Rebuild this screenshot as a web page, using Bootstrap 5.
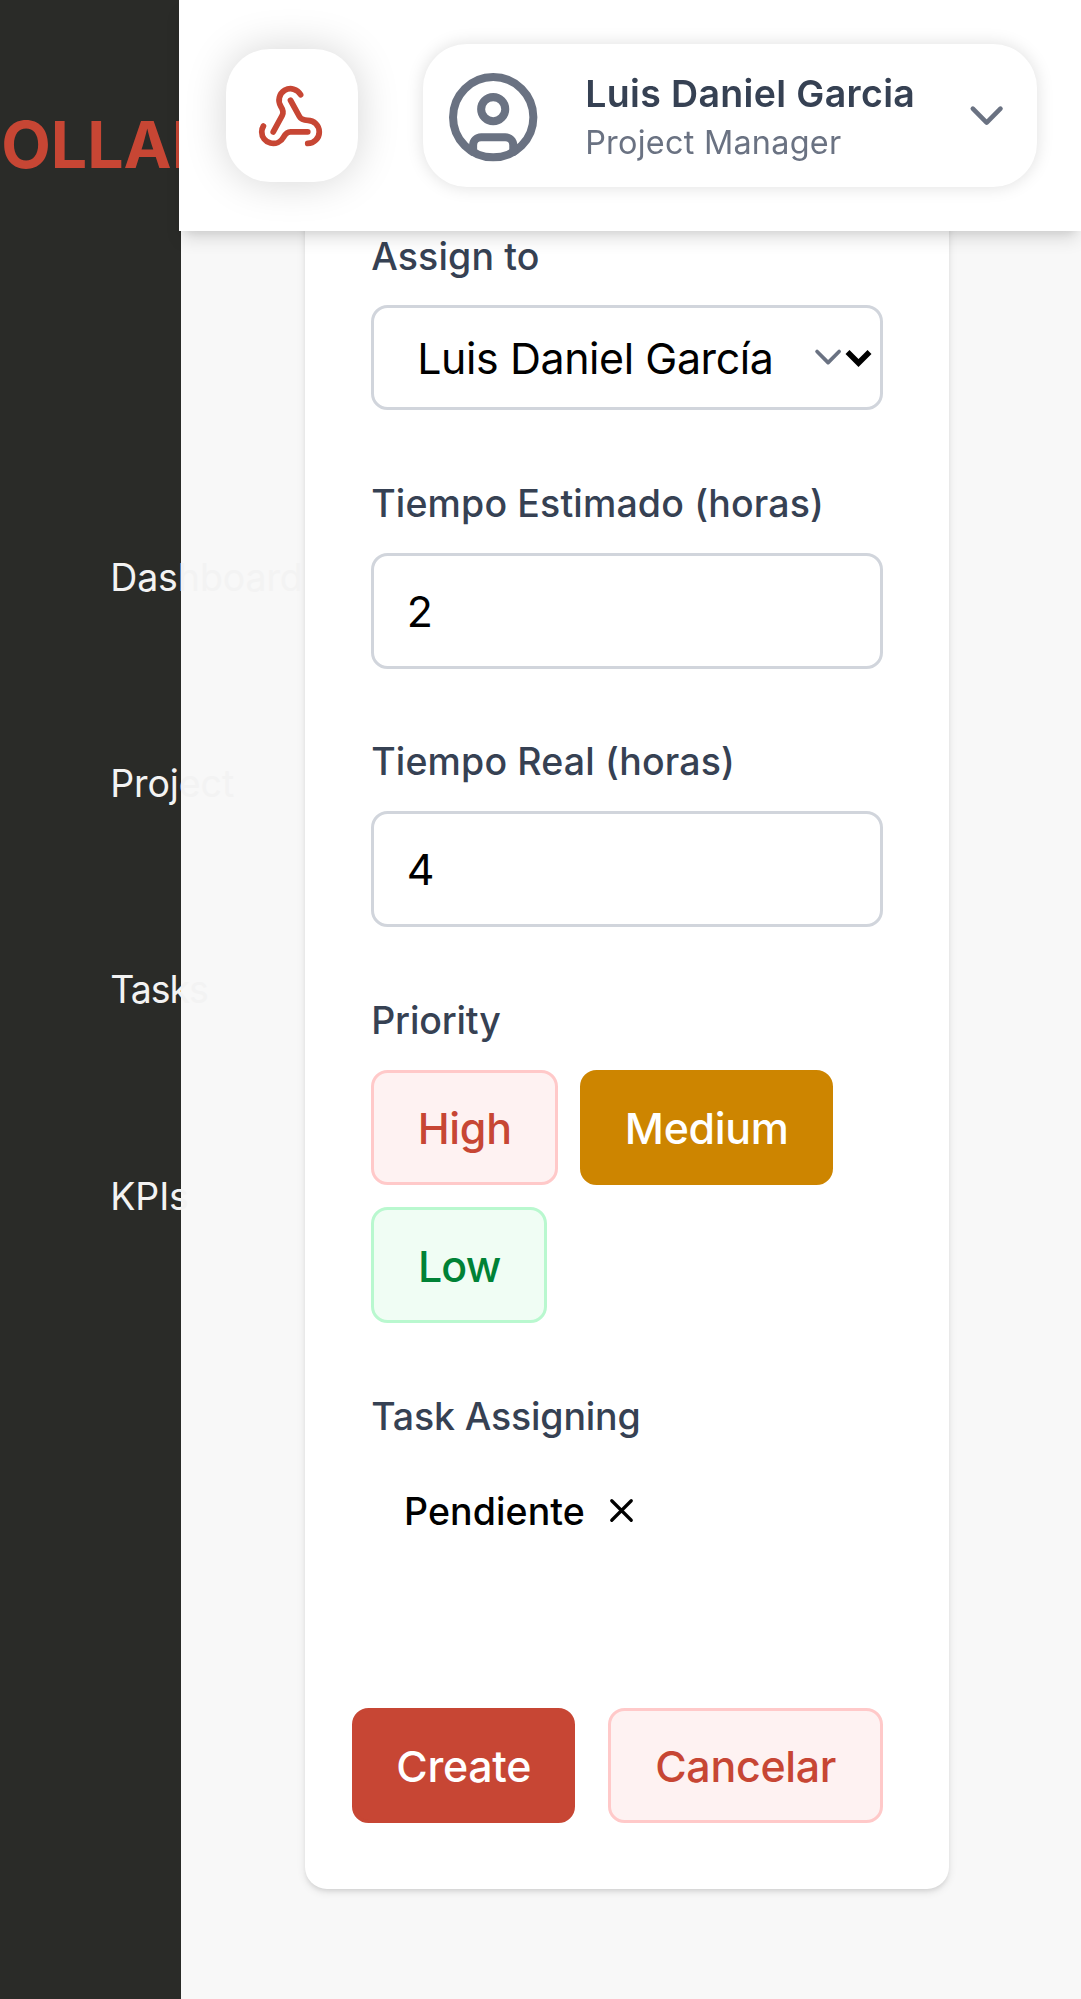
<!DOCTYPE html>
<html lang="es">
<head>
<meta charset="utf-8">
<meta name="viewport" content="width=device-width, initial-scale=1">
<title>Collab - Tasks</title>
<link href="https://cdn.jsdelivr.net/npm/bootstrap@5.3.0/dist/css/bootstrap.min.css" rel="stylesheet">
<style>
html{font-size:44.24px}
body{font-family:Inter,"Liberation Sans",sans-serif;background:#f8f8f8;width:1081px;height:1999px;overflow:hidden;color:#000}

/* sidebar */
.side{width:181.4px;height:1999px;background:#2a2b28;z-index:1}
.side-brand{height:290px;font-size:64.4px;font-weight:700;color:#c74634;line-height:290px;white-space:nowrap}
.side-brand span{margin-left:-46.5px}
.side-nav{padding-top:184.7px}
.side-nav a{height:206.3px;line-height:206.3px;padding:0 0 0 110.2px;font-size:37.5px;font-weight:430;color:#f3f3f3;white-space:nowrap;width:181.4px;letter-spacing:-.1px}
.side-nav .tight{letter-spacing:-1px}

/* top bar */
.topbar{left:179px;right:0;height:231px;background:#fff;box-shadow:0 11px 16.6px -2.8px rgba(0,0,0,.12),0 5.5px 11px -5.5px rgba(0,0,0,.12);padding:0 44px 0 46.6px;z-index:3}
.hook-btn{width:132.7px;height:132.7px;border-radius:44px;border:0;background:#fff;color:#c74634;box-shadow:0 0 42px rgba(0,0,0,.17);padding:3px 3px 0 0}
.user-btn{width:614px;height:143px;border-radius:44px;background:#fff;border:0;box-shadow:0 0 16.6px rgba(0,0,0,.13);padding:0 22.4px}
.user-avatar{margin-top:3px}
.user-text{padding-left:43.4px}
.user-name{font-size:37.5px;font-weight:620;line-height:55px;color:#364153;letter-spacing:.35px}
.user-role{font-size:32.4px;line-height:44px;color:#6a7282;letter-spacing:.25px}
.svgi{fill:none;stroke:currentColor;stroke-width:2;stroke-linecap:round;stroke-linejoin:round;flex:none;display:block}
.text-mute{color:#6a7282}

/* task form */
.form-card{width:643.5px;height:1789px;margin:100px 0 0 123.8px;border:0;border-radius:22px;background:#fff;box-shadow:0 2.8px 8.3px rgba(0,0,0,.1),0 2.8px 5.5px -2.8px rgba(0,0,0,.1);padding:127px 65.5px 66px 66px}
.fl{font-size:37.5px;font-weight:530;line-height:60px;color:#364153;margin:0 0 18px;display:block;letter-spacing:.15px}
.fl.snug{letter-spacing:-.15px}
.group-select{height:247px}
.group-input{height:258.4px}
.group-input .fl{margin-bottom:19px}
.group-priority{height:396.3px}
.group-priority .fl{margin-bottom:19.2px}
.field{width:512px;height:115.5px;border:3px solid #d1d5dc;border-radius:16.6px;font-size:42.9px;line-height:1.4;color:#000;padding:0 32.5px;background:#fff}
select.field{height:104.5px;padding:2px 40px 0 43px;background-image:none;letter-spacing:-.4px}
.caret-a,.caret-b{position:absolute;pointer-events:none}
.caret-a{left:434.7px;top:30px}
.caret-b{left:473.4px;top:44px}
.pbtn{height:115.5px;border-radius:16.6px;border:3px solid;font-size:42.9px;font-weight:550;padding:2px 0 0;line-height:1;letter-spacing:-.3px}
.p-red{background:#fef2f2;border-color:#ffc9c9;color:#c74634}
.p-amber{background:#cd8500;border-color:#cd8500;color:#fff}
.p-green{background:#f0fdf4;border-color:#b9f8cf;color:#008236;letter-spacing:-.8px}
.p-main{background:#c74634;border-color:#c74634;color:#fff}
.w-high{width:187px}
.w-medium{width:253px}
.w-low{width:176px}
.w-create{width:223px}
.w-cancel{width:275px}
.chip-row{font-size:37.5px;font-weight:530;line-height:60px;padding-left:32.8px;margin-top:35px;letter-spacing:.1px}
.chip-row svg{margin:-2.5px 0 0 17px}
.priority-list{gap:22px}
.form-actions{gap:33px;margin:165.700px 0 0 -30px}
</style>
<script src="https://cdn.jsdelivr.net/npm/bootstrap@5.3.0/dist/js/bootstrap.bundle.min.js"></script>
</head>
<body>
<div class="d-flex">
  <aside class="side position-relative flex-shrink-0">
    <div class="side-brand"><span>COLLAB</span></div>
    <nav class="side-nav nav flex-column flex-nowrap">
      <a class="nav-link" href="#">Dashboard</a>
      <a class="nav-link" href="#">Project</a>
      <a class="nav-link tight" href="#">Tasks</a>
      <a class="nav-link" href="#">KPIs</a>
    </nav>
  </aside>

  <header class="topbar position-fixed top-0 d-flex align-items-center justify-content-between">
    <button class="hook-btn d-flex align-items-center justify-content-center" type="button" aria-label="Webhooks">
      <svg class="svgi" width="69" height="69" viewBox="0 0 24 24"><path d="M18 16.98h-5.99c-1.1 0-1.95.94-2.48 1.9A4 4 0 0 1 2 17c.01-.7.2-1.4.57-2"/><path d="m6 17 3.13-5.78c.53-.97.1-2.18-.5-3.1a4 4 0 1 1 6.89-4.06"/><path d="m12 6 3.13 5.73C15.66 12.7 16.9 13 18 13a4 4 0 0 1 0 8"/></svg>
    </button>
    <button class="user-btn d-flex align-items-center text-start" type="button">
      <svg class="svgi text-mute user-avatar" width="96.4" height="96.4" viewBox="0 0 24 24"><circle cx="12" cy="12" r="10"/><circle cx="12" cy="10" r="3"/><path d="M7 20.662V19a2 2 0 0 1 2-2h6a2 2 0 0 1 2 2v1.662"/></svg>
      <span class="user-text d-flex flex-column flex-grow-1">
        <span class="user-name">Luis Daniel Garcia</span>
        <span class="user-role">Project Manager</span>
      </span>
      <svg class="svgi text-mute" width="55.3" height="55.3" viewBox="0 0 24 24"><path d="m6 9 6 6 6-6"/></svg>
    </button>
  </header>

  <main class="flex-grow-1">
    <form class="form-card card d-block">
      <div class="group-select">
        <label class="fl" for="assignee">Assign to</label>
        <div class="position-relative">
          <select id="assignee" class="field form-select"><option>Luis Daniel García</option></select>
          <svg class="svgi text-mute caret-a" width="44.2" height="44.2" viewBox="0 0 24 24"><path d="m6 9 6 6 6-6"/></svg>
          <svg class="caret-b" width="27" height="19" viewBox="0 0 27 19"><path d="M2.5 3 13.5 14 24.5 3" fill="none" stroke="#000" stroke-width="5.6"/></svg>
        </div>
      </div>
      <div class="group-input">
        <label class="fl" for="estimated">Tiempo Estimado (horas)</label>
        <input id="estimated" class="field form-control" value="2">
      </div>
      <div class="group-input">
        <label class="fl" for="actual">Tiempo Real (horas)</label>
        <input id="actual" class="field form-control" value="4">
      </div>
      <div class="group-priority">
        <span class="fl snug">Priority</span>
        <div class="priority-list d-flex flex-wrap">
          <button type="button" class="btn pbtn p-red w-high">High</button>
          <button type="button" class="btn pbtn p-amber w-medium">Medium</button>
          <button type="button" class="btn pbtn p-green w-low">Low</button>
        </div>
      </div>
      <div>
        <span class="fl snug">Task Assigning</span>
        <div class="chip-row d-flex align-items-center">
          <span>Pendiente</span>
          <svg class="svgi" width="39" height="39" viewBox="0 0 24 24"><path d="M18 6 6 18M6 6l12 12"/></svg>
        </div>
      </div>
      <div class="form-actions d-flex justify-content-end">
        <button type="submit" class="btn pbtn p-main w-create">Create</button>
        <button type="button" class="btn pbtn p-red w-cancel">Cancelar</button>
      </div>
    </form>
  </main>
</div>
</body>
</html>
